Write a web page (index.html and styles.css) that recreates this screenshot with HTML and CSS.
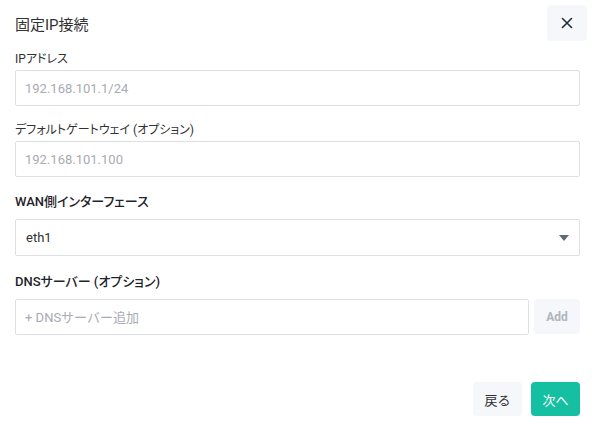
FILE: index.html
```html
<!DOCTYPE html>
<html lang="ja">
<head>
    <meta charset="UTF-8">
    <meta name="viewport" content="width=device-width, initial-scale=1.0">
    <title>固定IP接続</title>
    <link rel="stylesheet" href="styles.css">
</head>
<body>
    <div class="dialog">
        <div class="dialog-header">
            <h2 class="dialog-title">固定IP接続</h2>
            <button class="close-btn" type="button" aria-label="閉じる">
                <svg width="12" height="12" viewBox="0 0 12 12">
                    <path d="M1.5 1.5 L10.5 10.5 M10.5 1.5 L1.5 10.5" stroke="#1f2d3d" stroke-width="1.6" stroke-linecap="round"/>
                </svg>
            </button>
        </div>
        <form class="dialog-body">
            <div class="form-group">
                <label for="ip">IPアドレス</label>
                <input type="text" id="ip" placeholder="192.168.101.1/24">
            </div>
            <div class="form-group">
                <label for="gateway">デフォルトゲートウェイ (オプション)</label>
                <input type="text" id="gateway" placeholder="192.168.101.100">
            </div>
            <div class="form-group wide">
                <label class="strong" for="wan">WAN側インターフェース</label>
                <div class="select">
                    <span>eth1</span>
                    <svg width="10" height="6" viewBox="0 0 10 6">
                        <path d="M0 0 H10 L5 6 Z" fill="#5f6b7a"/>
                    </svg>
                </div>
            </div>
            <div class="form-group">
                <label class="strong" for="dns">DNSサーバー (オプション)</label>
                <div class="inline-row">
                    <input type="text" id="dns" placeholder="+ DNSサーバー追加">
                    <button type="button" class="add-btn">Add</button>
                </div>
            </div>
            <div class="dialog-footer">
                <button type="button" class="btn">戻る</button>
                <button type="button" class="btn primary">次へ</button>
            </div>
        </form>
    </div>
</body>
</html>
```

FILE: styles.css
```css
body {
    font-family: Roboto, "Noto Sans CJK JP", sans-serif;
    background-color: #fff;
    color: #303133;
    margin: 0;
}
.dialog {
    width: 595px;
}
.dialog-header {
    display: flex;
    align-items: center;
    justify-content: space-between;
    padding: 5px 8px 10px 15px;
}
.dialog-title {
    font-size: 15px;
    font-weight: normal;
    margin: 0;
    color: #303133;
}
.close-btn {
    width: 40px;
    height: 36px;
    border: none;
    border-radius: 4px;
    background-color: #f5f7fa;
    display: flex;
    align-items: center;
    justify-content: center;
    padding: 0;
}
.dialog-body {
    padding: 0 15px;
}
.form-group {
    margin-bottom: 16px;
}
.form-group.wide {
    margin-bottom: 17px;
}
.form-group label {
    display: block;
    font-size: 12px;
    line-height: 16px;
    margin-bottom: 3px;
    color: #303133;
    font-feature-settings: "palt";
}
.form-group label.strong {
    font-size: 13px;
    font-weight: 500;
    line-height: 18px;
    margin-bottom: 8px;
    color: #1f2329;
}
.form-group input {
    box-sizing: border-box;
    width: 100%;
    height: 36px;
    padding: 0 9px;
    border: 1px solid #dcdfe6;
    border-radius: 2px;
    font-family: inherit;
    font-size: 13px;
    color: #303133;
    outline: none;
}
.form-group input::placeholder {
    color: #a8abb2;
}
.select {
    box-sizing: border-box;
    height: 37px;
    border: 1px solid #dcdfe6;
    border-radius: 2px;
    display: flex;
    align-items: center;
    justify-content: space-between;
    padding: 0 10px 0 10px;
    font-size: 13px;
}
.inline-row {
    display: flex;
    gap: 5px;
}
.inline-row input {
    flex: 1;
}
.add-btn {
    width: 46px;
    height: 35px;
    border: none;
    border-radius: 4px;
    background-color: #f5f7fa;
    color: #b1b5bb;
    font-family: inherit;
    font-size: 12px;
    font-weight: bold;
}
.dialog-footer {
    display: flex;
    justify-content: flex-end;
    gap: 9px;
    padding-top: 31px;
}
.btn {
    width: 49px;
    height: 34px;
    border: none;
    border-radius: 4px;
    background-color: #f5f7fa;
    color: #303133;
    font-family: inherit;
    font-size: 13px;
    padding: 0;
}
.btn.primary {
    background-color: #15bfa2;
    color: #fff;
}
```
